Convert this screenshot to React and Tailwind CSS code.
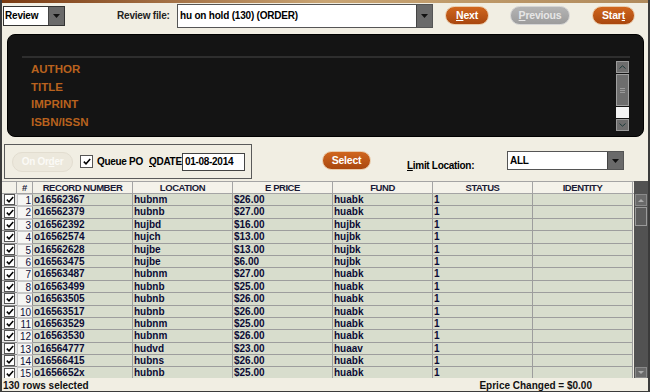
const ROWS = [
  ["o16562367", "hubnm", "$26.00", "huabk"],
  ["o16562379", "hubnb", "$27.00", "huabk"],
  ["o16562392", "hujbd", "$16.00", "hujbk"],
  ["o16562574", "hujch", "$13.00", "hujbk"],
  ["o16562628", "hujbe", "$13.00", "hujbk"],
  ["o16563475", "hujbe", "$6.00", "hujbk"],
  ["o16563487", "hubnm", "$27.00", "huabk"],
  ["o16563499", "hubnb", "$25.00", "huabk"],
  ["o16563505", "hubnb", "$26.00", "huabk"],
  ["o16563517", "hubnb", "$26.00", "huabk"],
  ["o16563529", "hubnm", "$25.00", "huabk"],
  ["o16563530", "hubnm", "$26.00", "huabk"],
  ["o16564777", "hudvd", "$23.00", "huaav"],
  ["o16566415", "hubns", "$26.00", "huabk"],
  ["o1656652x", "hubnb", "$25.00", "huabk"],
];

const FIELDS = ["AUTHOR", "TITLE", "IMPRINT", "ISBN/ISSN"];

function DropArrow() {
  return (
    <div className="w-[16px] shrink-0 h-full bg-[#6a6a6a] border-l border-[#444] flex items-center justify-center">
      <svg width="7" height="4" viewBox="0 0 7 4">
        <path d="M0 0h7L3.5 4z" fill="#111" />
      </svg>
    </div>
  );
}

function OrangeButton({ children, className }) {
  return (
    <div
      className={`shrink-0 h-[19px] rounded-full bg-gradient-to-b from-[#d0661e] to-[#a9470f] border border-[#e9c9a8] flex items-center justify-center text-white font-bold text-[10.5px] tracking-[-0.2px] whitespace-nowrap ${className}`}
    >
      {children}
    </div>
  );
}

function Check({ size = 11 }) {
  return (
    <div
      className="shrink-0 bg-white border border-[#555] flex items-center justify-center"
      style={{ width: size, height: size }}
    >
      <svg width="8" height="7" viewBox="0 0 8 7">
        <path d="M0.8 3.6L3 5.8 7.2 0.9" stroke="#000" strokeWidth="1.5" fill="none" />
      </svg>
    </div>
  );
}

export default function App() {
  return (
    <div className="w-[650px] h-[392px] bg-[#f1eee3] font-['Liberation_Sans',Arial,sans-serif] text-black flex flex-col overflow-hidden border-x-2 border-[#3b3b3b] border-b border-b-[#3b3b3b]">
      <div className="h-[3px] bg-gradient-to-r from-[#7a3a10] via-[#c9a574] to-[#b08a5c] shrink-0" />

      {/* top bar */}
      <div className="h-[25px] flex items-center shrink-0 text-[10px] tracking-[-0.2px] whitespace-nowrap">
        <div className="ml-[1px] w-[62px] h-[20px] shrink-0 bg-white border border-[#333] flex">
          <span className="flex-1 font-bold leading-[18px] pl-[1px]">Review</span>
          <DropArrow />
        </div>
        <span className="ml-[52px] w-[60px] shrink-0 font-bold text-[#222]">Review file:</span>
        <div className="w-[256px] h-[24px] shrink-0 bg-white border border-[#555] flex">
          <span className="flex-1 font-bold leading-[22px] pl-[2px]">hu on hold (130) (ORDER)</span>
          <DropArrow />
        </div>
        <OrangeButton className="ml-[12px] w-[44px]">
          <span><u>N</u>ext</span>
        </OrangeButton>
        <div className="ml-[21px] w-[60px] h-[19px] shrink-0 rounded-full bg-gradient-to-b from-[#b4b4b4] to-[#9c9c9c] border border-[#d4d4d4] flex items-center justify-center text-[#e6e6e6] font-bold text-[10.5px]">
          <span><u>P</u>revious</span>
        </div>
        <OrangeButton className="ml-[22px] w-[43px]">
          <span>Star<u>t</u></span>
        </OrangeButton>
      </div>

      {/* dark field panel */}
      <div className="mt-[6px] ml-[5px] w-[637px] h-[103px] bg-[#141414] border border-black rounded-[8px] shrink-0 flex flex-col">
        <div className="mt-[21px] ml-[14px] w-[608px] h-[2px] bg-[#2e2e2e]" />
        <div className="flex">
          <div className="ml-[23px] mt-[3px] flex flex-col">
            {FIELDS.map((f) => (
              <div key={f} className="h-[17.7px] leading-[17.7px] text-[11.5px] font-bold text-[#b9621e]">
                {f}
              </div>
            ))}
          </div>
          <div className="ml-auto mr-[14px] mt-[3px] w-[13px] h-[70px] flex flex-col gap-[1px]">
            <div className="h-[12px] bg-[#6d6d6d] border border-[#9a9a9a] flex items-center justify-center">
              <svg width="7" height="4" viewBox="0 0 7 4"><path d="M0.5 3.5L3.5 0.8 6.5 3.5" stroke="#1e3a3a" strokeWidth="1" fill="none" /></svg>
            </div>
            <div className="h-[32px] bg-[#6d6d6d] border border-[#a0a0a0] flex flex-col items-center justify-center gap-[1px]">
              <div className="w-[5px] h-[1px] bg-[#9a9a9a]" />
              <div className="w-[5px] h-[1px] bg-[#9a9a9a]" />
              <div className="w-[5px] h-[1px] bg-[#9a9a9a]" />
            </div>
            <div className="h-[11px] bg-[#f4f4f4]" />
            <div className="h-[12px] bg-[#6d6d6d] border border-[#9a9a9a] flex items-center justify-center">
              <svg width="7" height="4" viewBox="0 0 7 4"><path d="M0.5 0.5L3.5 3.2 6.5 0.5" stroke="#1e3a3a" strokeWidth="1" fill="none" /></svg>
            </div>
          </div>
        </div>
      </div>

      {/* options row */}
      <div className="h-[37px] mt-[7px] flex items-start shrink-0 text-[10px] tracking-[-0.3px] whitespace-nowrap font-bold">
        <div className="ml-[2px] w-[248px] h-[35px] shrink-0 border border-[#5a5a5a] flex items-center">
          <div className="ml-[7px] w-[61px] h-[20px] shrink-0 rounded-full border border-[#e2ddd0] bg-[#ece8dc] flex items-center justify-center text-[#fbfaf6]">
            <span>On Or<u>d</u>er</span>
          </div>
          <div className="ml-[7px]">
            <Check size={13} />
          </div>
          <span className="ml-[4px] w-[52px] shrink-0">Queue PO</span>
          <span className="w-[33px] shrink-0"><u>Q</u>DATE</span>
          <div className="w-[63px] h-[18px] shrink-0 bg-white border border-[#444] leading-[16px] pl-[2px]">
            01-08-2014
          </div>
        </div>
        <OrangeButton className="ml-[70px] mt-[7px] w-[49px]">Select</OrangeButton>
        <span className="ml-[36px] mt-[16px] w-[100px] shrink-0 leading-[12px]"><u>L</u>imit Location:</span>
        <div className="mt-[7px] w-[117px] h-[19px] shrink-0 bg-white border border-[#555] flex">
          <span className="flex-1 leading-[17px] pl-[2px]">ALL</span>
          <DropArrow />
        </div>
      </div>

      {/* table */}
      <div className="flex h-[197px] shrink-0 text-[10px] font-bold">
        <div className="w-[632px] flex flex-col">
          <div className="h-[13px] flex bg-[#f4f2ea] border-y border-[#a4a4a4] text-[#1a1a36] leading-[11px] shrink-0 text-[9.5px] tracking-[-0.45px]">
            <div className="w-[15px] border-r border-[#a4a4a4]" />
            <div className="w-[16px] border-r border-[#a4a4a4] text-center">#</div>
            {["RECORD NUMBER", "LOCATION", "E PRICE", "FUND", "STATUS", "IDENTITY"].map((h) => (
              <div key={h} className="w-[100px] border-r border-[#a4a4a4] text-center">
                {h}
              </div>
            ))}
          </div>
          <div className="flex-1 overflow-hidden">
            {ROWS.map((r, i) => (
              <div key={i} className="h-[12.4px] flex leading-[11px]">
                <div className="w-[15px] bg-[#e8e8e8] border-b border-[#8a8a8a] flex items-center justify-center">
                  <Check size={11} />
                </div>
                <div className="w-[16px] pr-[1px] bg-[#f6f6f4] border border-[#c8c8c8] border-r-[#8a8a8a] text-right text-[#10103a] font-normal text-[10px]">
                  {i + 1}
                </div>
                {[...r, "1", ""].map((c, j) => (
                  <div
                    key={j}
                    className="w-[100px] bg-[#d8ddcd] border-r border-b border-[#9d9d9d] pl-[1px] text-[#0b0b35] overflow-hidden whitespace-nowrap"
                  >
                    {c}
                  </div>
                ))}
              </div>
            ))}
          </div>
        </div>
        {/* table scrollbar */}
        <div className="w-[14px] bg-[#525252] flex flex-col">
          <div className="h-[13px]" />
          <div className="mx-[1px] h-[12px] bg-[#6a6a6a] border border-[#8a8a8a] flex items-center justify-center">
            <svg width="6" height="3" viewBox="0 0 6 3"><path d="M0 3L3 0 6 3z" fill="#aaa" /></svg>
          </div>
          <div className="mx-[1px] mt-[1px] h-[19px] bg-[#5c5c5c] border border-[#9a9a9a]" />
          <div className="flex-1" />
          <div className="mx-[1px] h-[11px] bg-[#6a6a6a] border border-[#8a8a8a] flex items-center justify-center">
            <svg width="6" height="3" viewBox="0 0 6 3"><path d="M0 0L3 3 6 0z" fill="#aaa" /></svg>
          </div>
        </div>
      </div>

      {/* status bar */}
      <div className="flex-1 flex items-center text-[10px] font-bold text-[#111]">
        <span className="ml-[1px]">130 rows selected</span>
        <span className="ml-auto mr-[56px]">Eprice Changed = $0.00</span>
      </div>
    </div>
  );
}
